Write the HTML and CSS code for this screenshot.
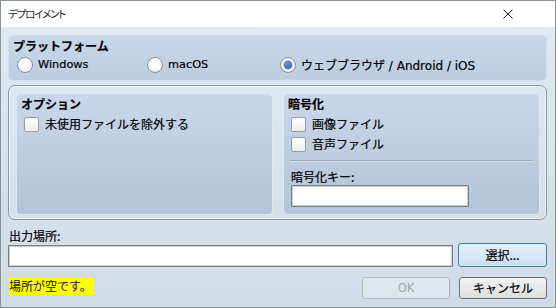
FILE: index.html
```html
<!DOCTYPE html>
<html lang="ja">
<head>
<meta charset="utf-8">
<title>デプロイメント</title>
<link rel="stylesheet" href="styles.css">
</head>
<body>
<div class="window">
  <div class="titlebar">
    <span class="title">デプロイメント</span>
    <span class="close"><svg width="10" height="10" viewBox="0 0 10 10"><path d="M0.5 0.5 L9.5 9.5 M9.5 0.5 L0.5 9.5" stroke="#222" stroke-width="1" fill="none"/></svg></span>
  </div>
  <div class="content">
    <section class="platform">
      <div class="gtitle">プラットフォーム</div>
      <div class="radios">
        <label class="opt w1"><span class="radio"></span><span class="en">Windows</span></label>
        <label class="opt w2"><span class="radio"></span><span class="en">macOS</span></label>
        <label class="opt"><span class="radio on"></span><span>ウェブブラウザ<span class="en wide"> / Android / iOS</span></span></label>
      </div>
    </section>
    <div class="frame">
      <section class="panel">
        <div class="gtitle">オプション</div>
        <label class="cbrow first"><span class="cb"></span><span>未使用ファイルを除外する</span></label>
      </section>
      <section class="panel">
        <div class="gtitle">暗号化</div>
        <label class="cbrow first"><span class="cb"></span><span>画像ファイル</span></label>
        <label class="cbrow"><span class="cb"></span><span>音声ファイル</span></label>
        <div class="sep"></div>
        <div class="keylabel">暗号化キー:</div>
        <div class="input key"></div>
      </section>
    </div>
    <div class="flabel">出力場所:</div>
    <div class="outrow">
      <div class="input path"></div>
      <button class="btn select">選択...</button>
    </div>
    <div class="bottom">
      <span class="warn">場所が空です。</span>
      <button class="btn ok" disabled>OK</button>
      <button class="btn cancel">キャンセル</button>
    </div>
  </div>
</div>
</body>
</html>
```

FILE: styles.css
```css
html, body {
  margin: 0;
  padding: 0;
  width: 556px;
  height: 308px;
  overflow: hidden;
}

body {
  font-family: "Noto Sans CJK JP", sans-serif;
  font-size: 12px;
  color: #000;
  -webkit-text-stroke: 0.2px currentColor;
}

.window {
  width: 556px;
  height: 308px;
  box-sizing: border-box;
  border: 1px solid #8a948f;
  background: linear-gradient(#e0eaf5, #d1dbe7);
  display: flex;
  flex-direction: column;
}

.titlebar {
  height: 26px;
  background: #fff;
  display: flex;
  align-items: center;
  justify-content: space-between;
  padding-left: 7px;
}

.title {
  font-size: 10.5px;
  line-height: 14px;
  font-feature-settings: "palt";
  letter-spacing: -1.2px;
  color: #222;
  -webkit-text-stroke: 0;
}

.close {
  width: 20px;
  height: 20px;
  margin-right: 37px;
  display: flex;
  align-items: center;
  justify-content: center;
}

.content {
  padding: 8px 8px 0 7px;
  display: flex;
  flex-direction: column;
}

.en {
  font-family: "DejaVu Sans", sans-serif;
  font-size: 11.3px;
}

.en.wide {
  font-size: 12px;
}

.gtitle {
  font-weight: bold;
  line-height: 14px;
  height: 14px;
}

.platform {
  height: 46px;
  box-sizing: border-box;
  padding: 3px 4px 0;
  border: 1px solid #d3e0ee;
  border-radius: 5px;
  background: linear-gradient(#c8d8ea, #bccde1);
}

.radios {
  display: flex;
  margin-top: 4px;
  margin-left: 4px;
  height: 16px;
  align-items: center;
}

.opt {
  display: flex;
  align-items: center;
  gap: 5px;
  line-height: 16px;
}

.w1 { width: 130px; }
.w2 { width: 133px; }

.radio {
  width: 16px;
  height: 16px;
  box-sizing: border-box;
  border-radius: 50%;
  border: 1px solid #8b8f94;
  background: radial-gradient(circle at 50% 35%, #ffffff 40%, #e4e6e9 100%);
  flex: none;
  position: relative;
}

.radio.on::after {
  content: "";
  position: absolute;
  left: 3px;
  top: 3px;
  width: 8px;
  height: 8px;
  border-radius: 50%;
  background: radial-gradient(circle at 40% 35%, #6f8fd6, #2f4f9f);
  box-shadow: 0 0 0 1px #c9d6ef;
}

.frame {
  margin-top: 4px;
  height: 135px;
  box-sizing: border-box;
  border: 1px solid #8d949c;
  border-radius: 7px;
  padding: 7px 6px 4px 7px;
  display: flex;
  gap: 10px;
  background: linear-gradient(#dde7f2, #d5dfea);
  box-shadow: inset 0 0 0 1px #eef3f9;
}

.panel {
  flex: 1;
  box-sizing: border-box;
  border: 1px solid #dfe8f2;
  border-radius: 5px;
  padding: 3px 4px;
  background: linear-gradient(#c8d8ea, #b3c3d6);
  display: flex;
  flex-direction: column;
}

.cbrow {
  display: flex;
  align-items: center;
  gap: 6px;
  height: 16px;
  line-height: 16px;
  margin-top: 4px;
  margin-left: 3px;
}

.cbrow.first {
  margin-top: 5px;
}

.cb {
  width: 15px;
  height: 15px;
  box-sizing: border-box;
  border: 1px solid #9a9ea3;
  border-radius: 2px;
  background: linear-gradient(#ffffff, #eceef0);
  flex: none;
}

.sep {
  height: 1px;
  background: #9eaab7;
  margin: 8px 3px 0 2px;
  box-shadow: 0 1px 0 #d5dfea;
}

.keylabel {
  margin-top: 9px;
  margin-left: 3px;
  line-height: 14px;
  height: 14px;
}

.input {
  box-sizing: border-box;
  height: 22px;
  background: #fff;
  border: 1px solid #7d7f82;
  box-shadow: inset 0 0 0 1px #c9cbcd;
}

.input.key {
  width: 178px;
  margin-top: 1px;
  margin-left: 3px;
}

.flabel {
  margin-top: 9px;
  line-height: 14px;
  height: 14px;
  margin-left: 1px;
}

.outrow {
  display: flex;
  align-items: flex-end;
  gap: 5px;
  height: 24px;
}

.input.path {
  width: 445px;
}

.btn {
  font-family: "Noto Sans CJK JP", sans-serif;
  font-size: 12px;
  color: #000;
  -webkit-text-stroke: 0.2px currentColor;
  box-sizing: border-box;
  height: 22px;
  width: 88px;
  padding: 0;
  line-height: 18px;
  border-radius: 3px;
  border: 1px solid #707070;
  background: linear-gradient(#f3f3f3, #dddddd);
}

.btn.select {
  width: 89px;
  height: 24px;
  border-color: #3c7fb1;
  background: linear-gradient(#e7f1fb, #c9ddf2);
  box-shadow: inset 0 0 0 1px #d9e9f8;
}

.bottom {
  margin-top: 10px;
  display: flex;
  align-items: flex-start;
  height: 22px;
}

.warn {
  background: #ffff00;
  height: 18px;
  line-height: 18px;
  padding: 0 2px 0 0;
  margin-left: 1px;
  color: #111;
  -webkit-text-stroke: 0;
}

.btn.ok {
  margin-left: auto;
  border-color: #b3b8bd;
  background: #dfe5ec;
  color: #a2a5a8;
  font-family: "DejaVu Sans", sans-serif;
  font-size: 11.5px;
  -webkit-text-stroke: 0;
}

.btn.cancel {
  margin-left: 9px;
}
```
